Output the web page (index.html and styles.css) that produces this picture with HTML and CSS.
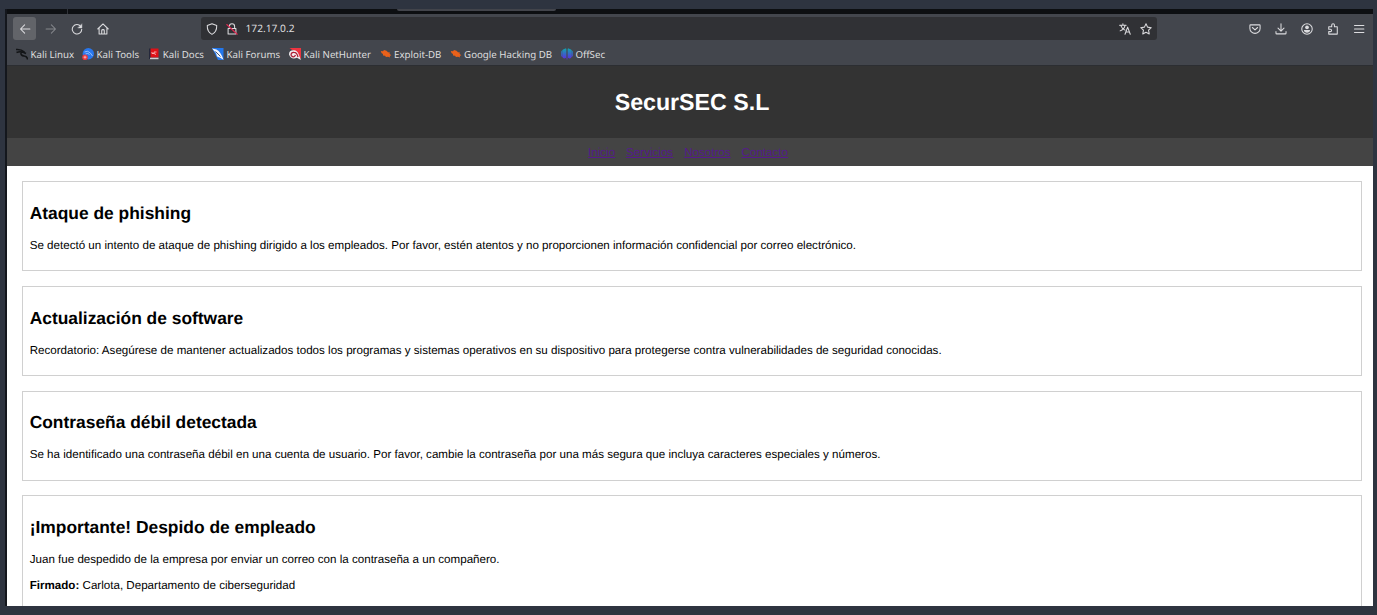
FILE: index.html
```
<!DOCTYPE html>
<html lang="es">
<head>
<meta charset="utf-8">
<title>SecurSEC S.L</title>
<link rel="stylesheet" href="styles.css">
</head>
<body>
<div class="window">
  <div class="tabstrip"><span class="tab-edge"></span><span class="active-tab"></span></div>
  <div class="toolbar">
    <div class="nav-buttons">
      <span class="btn back"><svg class="ic" viewBox="0 0 16 16"><path d="M14.500 8H2M7.500 2.500 2 8l5.500 5.500"/></svg></span>
      <span class="btn dim"><svg class="ic" viewBox="0 0 16 16"><path d="M1.500 8H14M8.500 2.500 14 8l-5.500 5.500"/></svg></span>
      <span class="btn"><svg class="ic" viewBox="0 0 16 16"><path d="M13 4.500A6.300 6.300 0 1 0 14.300 8.500"/><path d="M14.500 1.500v5H9.500z" fill="currentColor" stroke-width=".6"/></svg></span>
      <span class="btn"><svg class="ic" viewBox="0 0 16 16"><path d="M1 8 8 1.300 15 8M2.800 7v7.700h10.400V7M6.300 14.500V10q0-1.200 1.700-1.200T9.700 10v4.500"/></svg></span>
    </div>
    <div class="urlbar">
      <svg class="ic shield" viewBox="0 0 16 16"><path d="M8 1 14.300 3.300C14.500 9 12.300 13 8 15.200 3.700 13 1.500 9 1.700 3.300z"/></svg>
      <svg class="ic lock" viewBox="0 0 16 16"><path d="M4.500 7V4.500a3.500 3.500 0 0 1 7 0V7M2.800 7.200h10.400v7.500H2.800z"/><path class="strike" d="M1 2 15 15"/></svg>
      <span class="url">172.17.0.2</span>
      <svg class="ic translate" viewBox="0 0 16 16"><path d="M.8 3h8.700M5.200 1v2M2.500 3.500C3.500 6.500 5.500 8.500 8 9.500M8 3.500C7.200 7 4.500 9.500 1.500 10.500M8 15l3.500-9.500L15 15M9.200 12h4.600"/></svg>
      <svg class="ic star" viewBox="0 0 16 16"><path d="m8 1 2.100 4.500 4.900.7-3.600 3.400.9 5L8 12.300l-4.300 2.300.9-5L1 6.200l4.900-.7z"/></svg>
    </div>
    <div class="actions">
      <svg class="ic" viewBox="0 0 16 16"><path d="M2 2.500h12q.8 0 .8.800v4A6.800 6.500 0 0 1 1.200 7.300v-4q0-.8.800-.8zM4.500 6 8 9.300 11.500 6"/></svg>
      <svg class="ic" viewBox="0 0 16 16"><path d="M8 1v9.500M4 6.800l4 4 4-4M1.300 11.500v2q0 1 1 1h11.400q1 0 1-1v-2"/></svg>
      <svg class="ic" viewBox="0 0 16 16"><circle cx="8" cy="8" r="7"/><circle class="solid" cx="8" cy="5.800" r="2.500"/><path class="solid" d="M3.800 9.300h8.400c-.2 2.300-1.900 3.600-4.200 3.600S4 11.600 3.800 9.300z"/></svg>
      <svg class="ic" viewBox="0 0 16 16"><path d="M2.300 5h4V2.700a1.800 1.800 0 0 1 3.600 0V5H13.700v9.800H2.300v-3.300h2.200a1.600 1.600 0 0 0 0-3.200H2.300z"/></svg>
      <svg class="ic" viewBox="0 0 16 16"><path d="M2 3.300h12.500M2 8h12.500M2 12.700h12.500"/></svg>
    </div>
  </div>
  <div class="bookmarks">
    <span class="bm b1"><svg viewBox="0 0 12 12"><path fill="none" stroke="#131517" stroke-width="1.600" d="M0 1.500Q5 1 8.500 4M.5 4.500Q5 2.500 10 5.500M5 4.500Q4.500 7.500 8 8T11.500 11.500"/></svg>Kali Linux</span>
    <span class="bm b2"><svg viewBox="0 0 12 12"><circle cx="6.300" cy="5.800" r="5.700" fill="#2877ee"/><path d="M2.500 4Q6 2 8.500 5.200L10.500 8M3.500 6Q6 4.500 7.500 6.500" fill="none" stroke="#b3d2ff" stroke-width=".8"/><circle cx="3" cy="9.200" r="2.800" fill="#e5383f"/><path d="M1.500 9.200h3M3 7.700v3" stroke="#ffc7c7" stroke-width=".8"/></svg>Kali Tools</span>
    <span class="bm b3"><svg viewBox="0 0 12 12"><path fill="#24283b" d="M1 .5h2V11H1z"/><path fill="#df1118" d="M2.500.5H10.500v9h-8z"/><path fill="#cfcfd2" d="M2 9.700h8.500v1.500H2z"/><path d="M4 4v1.500h2v-1.500h2.500M6 5.500l2 1" stroke="#ffc9c9" fill="none" stroke-width=".8"/></svg>Kali Docs</span>
    <span class="bm b4"><svg viewBox="0 0 12 12"><path fill="#2277ed" d="M0 0h11.500v12H6z"/><path d="M0 .5 4.500 1.500Q9 4 11.500 11.800 8 9.500 5 8.500L4 5z" fill="#f2f6ff"/><path d="m3.500 3.500 5 5" stroke="#344767" stroke-width=".9"/></svg>Kali Forums</span>
    <span class="bm b5"><svg viewBox="0 0 12 12"><path fill="#ed3440" d="M.5 0H12v11L6 4z"/><path d="M0 6.500Q0 2 5 2.300 8 2.300 9.500 6L12 12 8 9.800Q2 12 0 6.500z" fill="#f1edf0"/><path d="M2 7.500Q2 4 5 4.300 8 4.300 9 9M2.200 7.500Q5 10.500 6.500 7" fill="none" stroke="#ac2035" stroke-width="1.300"/></svg>Kali NetHunter</span>
    <span class="bm b6"><svg viewBox="0 0 12 12"><path class="bug" d="M.8 3 3 3.200 4 2 6.500 2.700 8 4.300l2 .2-.5 1L11.300 7.500 9.800 7.800 10 9.500 8 8.700 6 9 5 7.800 3 7.500 3 6 1.500 5z"/></svg>Exploit-DB</span>
    <span class="bm b7"><svg viewBox="0 0 12 12"><path class="bug" d="M.8 3 3 3.200 4 2 6.500 2.700 8 4.300l2 .2-.5 1L11.300 7.500 9.800 7.800 10 9.500 8 8.700 6 9 5 7.800 3 7.500 3 6 1.500 5z"/></svg>Google Hacking DB</span>
    <span class="bm b8"><svg viewBox="0 0 12 12"><defs><linearGradient id="off" gradientUnits="userSpaceOnUse" x1="0" y1="1" x2="0" y2="11"><stop stop-color="#159fb0"/><stop offset="1" stop-color="#5c2ce0"/></linearGradient></defs><path fill="url(#off)" d="M.2 3.500 1.800 1.600v8.200L.2 8zM2 1.400 5 .2v9.500L3.500 10.500 2 10zM5.600.8h.8v10.700h-.8zM7 .2l3 1.200V10l-1.500.5L7 9.700zM10.200 1.600 11.800 3.500V8l-1.600 1.800z"/></svg>OffSec</span>
  </div>
  <main class="page">
    <header class="site-header"><h1>SecurSEC S.L</h1></header>
    <nav class="site-nav"><a href="#">Inicio</a><a href="#">Servicios</a><a href="#">Nosotros</a><a href="#">Contacto</a></nav>
    <div class="notices">
      <section class="card"><h2>Ataque de phishing</h2><p>Se detectó un intento de ataque de phishing dirigido a los empleados. Por favor, estén atentos y no proporcionen información confidencial por correo electrónico.</p></section>
      <section class="card"><h2>Actualización de software</h2><p>Recordatorio: Asegúrese de mantener actualizados todos los programas y sistemas operativos en su dispositivo para protegerse contra vulnerabilidades de seguridad conocidas.</p></section>
      <section class="card"><h2>Contraseña débil detectada</h2><p>Se ha identificado una contraseña débil en una cuenta de usuario. Por favor, cambie la contraseña por una más segura que incluya caracteres especiales y números.</p></section>
      <section class="card"><h2>¡Importante! Despido de empleado</h2><p>Juan fue despedido de la empresa por enviar un correo con la contraseña a un compañero.</p><p><strong>Firmado:</strong> Carlota, Departamento de ciberseguridad</p></section>
    </div>
  </main>
</div>
</body>
</html>
```
FILE: styles.css
```
* { box-sizing: border-box; }
body {
  margin: 0;
  height: 615px;
  padding: 9px 4px 9px 5px;
  overflow: hidden;
  background: #2e3440;
  text-rendering: geometricPrecision;
}
.window {
  height: 597px;
  display: flex;
  flex-direction: column;
  border-left: 2px solid #14171d;
  overflow: hidden;
}
.tabstrip { height: 5px; flex: none; display: flex; background: #0d0f12; }
.tab-edge { width: 61px; border-right: 1px solid #303238; }
.active-tab { width: 159px; height: 2px; margin-left: 329px; background: #42444b; border-radius: 0 0 2px 2px; }
.toolbar {
  height: 29px;
  flex: none;
  display: flex;
  align-items: center;
  padding: 0 6px;
  background: #43464d;
  color: #dcdcdf;
}
.ic { width: 12px; height: 12px; flex: none; fill: none; stroke: currentColor; stroke-width: 1.4; stroke-linejoin: round; stroke-linecap: round; }
.ic .solid { fill: currentColor; stroke: none; }
.nav-buttons { display: flex; gap: 3px; width: 188px; }
.btn { width: 23px; height: 23px; border-radius: 3px; display: flex; align-items: center; justify-content: center; }
.back { background: #626469; }
.dim { color: #85878c; }
.urlbar {
  width: 956px;
  height: 23px;
  display: flex;
  align-items: center;
  padding: 0 5px;
  border-radius: 3px;
  background: #303135;
}
.lock { margin-left: 8px; }
.ic .strike { stroke: #df2850; }
.url { flex: 1; margin: -1px 0 0 7.5px; font: 10.2px/14px "Noto Sans", sans-serif; }
.star { margin-left: 9px; }
.actions { display: flex; gap: 14.2px; margin-left: 91.5px; }
.bookmarks {
  height: 23px;
  flex: none;
  display: flex;
  padding: 0 9px;
  background: #43464d;
  border-bottom: 1px solid #2c2e32;
  color: #dededf;
  font: 9.7px/23px "Noto Sans", sans-serif;
  white-space: nowrap;
}
.bm { display: flex; align-items: center; gap: 2.5px; flex: none; }
.bm svg { width: 12px; height: 12px; flex: none; }
.b1 { width: 66px; }
.b2 { width: 66.3px; }
.b3 { width: 63.8px; }
.b4 { width: 77px; }
.b5 { width: 90.5px; }
.b6 { width: 70px; }
.b7 { width: 111.3px; }
.bug { fill: #e9611a; }
.page {
  flex: 1;
  min-height: 0;
  overflow: hidden;
  background: #fff;
  color: #000;
  font: 11.6px/13px "Liberation Sans", Arial, sans-serif;
}
.site-header { height: 72px; padding: 22px 0 0 4px; background: #333; color: #fff; text-align: center; }
h1 { margin: 0; font-size: 23.2px; line-height: 28px; }
.site-nav { height: 28px; display: flex; justify-content: center; align-items: center; gap: 11px; padding-right: 4px; background: #444; }
.site-nav a { color: #551a8b; }
.notices { display: flex; flex-direction: column; gap: 14.8px; padding: 15px 11px 0 15px; }
.card { height: 90px; flex: none; padding: 20.8px 6.7px 0; border: 1px solid #d0d0d0; }
.card:last-child { height: 150px; }
h2 { margin: 0; font-size: 17.4px; line-height: 21px; }
p { margin: 15px 0 0; white-space: nowrap; }
p + p { margin-top: 12.5px; }
```
